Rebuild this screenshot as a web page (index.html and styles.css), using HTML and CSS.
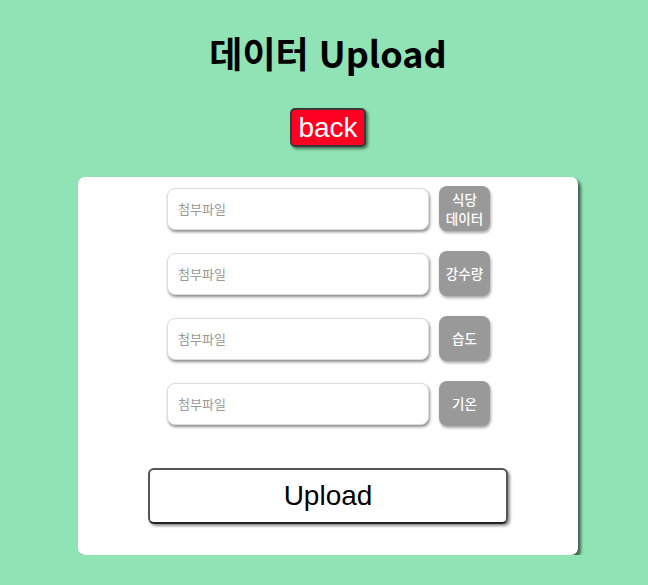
FILE: index.html
```html
<!DOCTYPE html>
<html lang="ko">
<head>
<meta charset="utf-8">
<link rel="stylesheet" href="styles.css">
</head>
<body>
<div class="page">
  <h1 class="title">데이터 Upload</h1>
  <button class="back">back</button>
  <div class="card">
    <div class="rows">
      <div class="row"><input class="file" placeholder="첨부파일"><button class="tag">식당<br>데이터</button></div>
      <div class="row"><input class="file" placeholder="첨부파일"><button class="tag">강수량</button></div>
      <div class="row"><input class="file" placeholder="첨부파일"><button class="tag">습도</button></div>
      <div class="row"><input class="file" placeholder="첨부파일"><button class="tag">기온</button></div>
    </div>
    <button class="upload">Upload</button>
  </div>
</div>
</body>
</html>
```
FILE: styles.css
```css
html, body {
  margin: 0;
  background: #90e3b4;
}
body {
  padding-left: 8px;
  font-family: "Noto Sans CJK KR", "Noto Sans", sans-serif;
}
.page {
  width: 640px;
  display: flex;
  flex-direction: column;
  align-items: center;
}
.title {
  margin: 29px 0 0;
  font-size: 36px;
  line-height: 46px;
  font-weight: 700;
  color: #000;
}
.back {
  margin-top: 33px;
  height: 39px;
  padding: 0 6px;
  background: #ff0022;
  color: #fff;
  border: 2px solid #3a3a3a;
  border-radius: 5px;
  font-family: "Liberation Sans", Arial, sans-serif;
  font-size: 28px;
  line-height: 33px;
  box-shadow: 2px 2px 3px rgba(0,0,0,0.5);
}
.card {
  margin-top: 30px;
  width: 500px;
  box-sizing: border-box;
  background: #fff;
  border-radius: 7px;
  box-shadow: 3px 3px 3px rgba(0,0,0,0.55);
  padding: 9px 0 31px;
  display: flex;
  flex-direction: column;
  align-items: center;
}
.rows {
  display: flex;
  flex-direction: column;
  gap: 20px;
}
.row {
  display: flex;
  align-items: center;
  gap: 10px;
  margin-left: 1px;
}
.file {
  width: 262px;
  height: 42px;
  box-sizing: border-box;
  border: 1px solid #ddd;
  border-radius: 8px;
  padding: 0 10px;
  font-family: "Noto Sans CJK KR", sans-serif;
  font-size: 13px;
  box-shadow: 1px 2px 3px rgba(0,0,0,0.45);
  outline: none;
}
.file::placeholder {
  color: #999;
}
.tag {
  width: 51px;
  height: 45px;
  padding: 0;
  border: none;
  border-radius: 8px;
  background: #999;
  color: #fff;
  font-family: "Noto Sans CJK KR", sans-serif;
  font-size: 13.5px;
  font-weight: 500;
  line-height: 19px;
  box-shadow: 1px 2px 3px rgba(0,0,0,0.35);
}
.upload {
  margin-top: 42px;
  width: 360px;
  height: 56px;
  background: #fff;
  border: 2px solid #555;
  border-bottom-color: #222;
  border-radius: 6px;
  font-family: "Liberation Sans", Arial, sans-serif;
  font-size: 28px;
  color: #000;
  box-shadow: 2px 2px 3px rgba(0,0,0,0.45);
}
```
